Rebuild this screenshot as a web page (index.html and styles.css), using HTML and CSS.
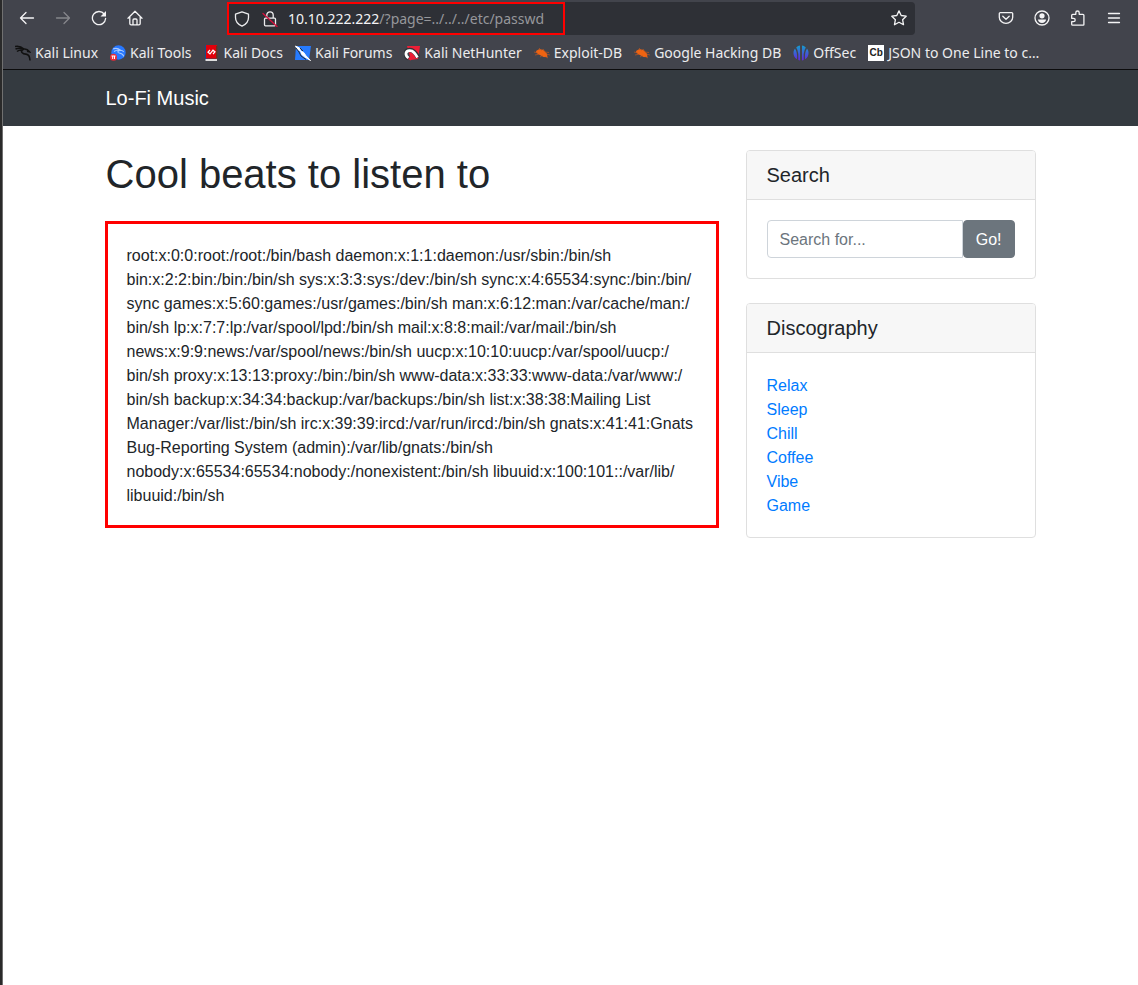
FILE: index.html
```html
<!DOCTYPE html>
<html lang="en">
<head>
<meta charset="utf-8">
<title>Lo-Fi Music</title>
<link rel="stylesheet" href="styles.css">
</head>
<body>
<div class="window">
  <header class="browser">
    <div class="toolbar">
      <div class="nav-buttons">
        <button class="tool" aria-label="Back"><svg viewBox="0 0 16 16"><path d="M14.500 8H1.500M7 2.500 1.500 8 7 13.500"/></svg></button>
        <button class="tool dim" aria-label="Forward" disabled><svg viewBox="0 0 16 16"><path d="M1.500 8h13M9 2.500 14.500 8 9 13.500"/></svg></button>
        <button class="tool" aria-label="Reload"><svg viewBox="0 0 16 16"><path d="M13.200 4A6.600 6.600 0 1 0 14.600 8.500"/><path class="solid" d="M15 1v5.500H9.500z"/></svg></button>
        <button class="tool" aria-label="Home"><svg viewBox="0 0 16 16"><path d="M1 8.200 8 1.200l7 7M2.800 7v6.500q0 1.300 1.300 1.300h7.800q1.300 0 1.300-1.300V7M6 14.500V10q0-1 1-1h2q1 0 1 1v4.500"/></svg></button>
      </div>
      <div class="urlbar">
        <div class="address">
          <svg class="icon" viewBox="0 0 16 16"><path d="M8 .9 14.500 3.200v3.300c0 4-2.500 7-6.500 8.700C4 13.500 1.500 10.500 1.500 6.500V3.200z"/></svg>
          <svg class="icon" viewBox="0 0 16 16"><path d="M4.800 7V4a3.200 3.200 0 0 1 6.400 0v3M3.500 7.200h9q1 0 1 1v5.600q0 1-1 1h-9q-1 0-1-1V8.200q0-1 1-1z"/><path class="strike" d="M1 2.500 15 15.500"/></svg>
          <span class="url"><span class="host">10.10.222.222</span>/?page=../../../etc/passwd</span>
        </div>
        <button class="star" aria-label="Bookmark this page"><svg class="icon" viewBox="0 0 16 16"><path d="m8 .9 2.200 4.600 5 .7-3.600 3.500.9 5L8 12.300l-4.500 2.400.9-5L.8 6.200l5-.7z"/></svg></button>
      </div>
      <div class="nav-buttons">
        <button class="tool" aria-label="Save to Pocket"><svg viewBox="0 0 16 16"><path d="M2.300 2.600h11.400q1 0 1 1v3.600a6.700 6.200 0 0 1-13.400 0V3.600q0-1 1-1zM4.800 6.200 8 9.200l3.200-3"/></svg></button>
        <button class="tool" aria-label="Account"><svg viewBox="0 0 16 16"><circle cx="8" cy="8" r="7"/><circle class="fill" cx="8" cy="5.800" r="2.600"/><path class="fill" d="M3.900 9.500h8.200Q11.500 12.900 8 12.900T3.900 9.500z"/></svg></button>
        <button class="tool" aria-label="Extensions"><svg viewBox="0 0 16 16"><path d="M5.800 4.300V2.700a1.700 1.700 0 0 1 3.400 0v1.600h3.700q1 0 1 1v9.300q0 .6-.6.600H2.700q-1 0-1-1v-2.500h1.800a1.700 1.700 0 0 0 0-3.400H1.700V5.300q0-1 1-1z"/></svg></button>
        <button class="tool" aria-label="Menu"><svg viewBox="0 0 16 16"><path d="M2.500 3.500h11M2.500 8h11M2.500 12.500h11"/></svg></button>
      </div>
    </div>
    <nav class="bookmarks" aria-label="Bookmarks">
      <a href="#"><svg viewBox="0 0 16 16"><g class="dragon-dark"><path d="M0 1.500Q5 .5 9 4M.500 4q4-1.600 8.500 0M2 6.500q2-1.600 4.500-1.500M9 4Q5.500 5.500 7 7.500q1.500 1.700 4 1.600 3.800.4 4 6.400M9 4q3-.5 5.500 2.800L12 6.200"/></g></svg>Kali Linux</a>
      <a href="#"><svg viewBox="0 0 16 16"><circle cx="8.500" cy="7.500" r="7.200" fill="#2777ff"/><path d="M3 4q4-1.800 7.500 1.200Q7 6 8.200 7.500c1.200 1.300 4.700.3 5.500 4M4 6.500q3-2 6.500-1.300 2 0 3.200 1.700" fill="none" stroke="#a9cbff" stroke-width="1.100"/><circle cx="3.500" cy="12.200" r="3.500" fill="#ec2937"/><path d="M1.500 11h4M2.700 11v3M4.500 11v3" stroke="#fff" fill="none"/></svg>Kali Tools</a>
      <a href="#"><svg viewBox="0 0 16 16"><path d="M1 0h4v15H1z" fill="#174a8b"/><path d="M2 0h11v13.500H2z" fill="#e1000b"/><path d="M12 1h1.500v12H12z" fill="#6b321c"/><path d="M1.500 14H13v2H1.500z" fill="#dedede"/><path d="M6 5 4 7.200l2 1.600 3-3.600 2 1.600L9 9" fill="none" stroke="#fff" stroke-width="1.200"/></svg>Kali Docs</a>
      <a href="#"><svg viewBox="0 0 16 16"><path d="M1 1h15l-2 14H0z" fill="#267bff"/><path d="M.5 1 4.500 3l1 3 3 1.300 2.500 3.500 4.500 4.700-6-3.700-3-2.500-.8-3L2.500 4.500z" fill="#fff" stroke="#fff"/><path d="m1 3 3 4 2 4 5 3.500M5 3l3 3" fill="none" stroke="#292d33"/></svg>Kali Forums</a>
      <a href="#"><svg viewBox="0 0 16 16"><path d="M3 1h13l-2 13-7 1z" fill="#ed1e36"/><path d="M4.500 13.500C-.5 10 1 5.300 5.500 5c4-.3 6.500 3.500 8.500 7.500" fill="none" stroke="#30343a" stroke-width="4.500"/><path d="M4.500 13C.500 10 1.500 6 5.500 5.700c4-.3 6 3.300 8 6.800" fill="none" stroke="#fff" stroke-width="2.800"/><path d="m4 14 2.500-3 2 2-2 2.500z" fill="#ed1e36"/></svg>Kali NetHunter</a>
      <a href="#"><svg viewBox="0 0 16 16"><path d="m2 6 3-1.800 4 .5 4 4 .5 3.500-4-.2-4.500-2.500L2.500 8z" fill="#ef6412"/><path d="m0 7 4 1M5 3l3 3M1 10l5-1M6 12l3-2M9 4l2 3 4 .5M12 9l4 1M11 11l3 2" fill="none" stroke="#d65b17" stroke-width=".6"/></svg>Exploit-DB</a>
      <a href="#"><svg viewBox="0 0 16 16"><path d="m2 6 3-1.800 4 .5 4 4 .5 3.500-4-.2-4.500-2.500L2.500 8z" fill="#ef6412"/><path d="m0 7 4 1M5 3l3 3M1 10l5-1M6 12l3-2M9 4l2 3 4 .5M12 9l4 1M11 11l3 2" fill="none" stroke="#d65b17" stroke-width=".6"/></svg>Google Hacking DB</a>
      <a href="#"><svg viewBox="0 0 16 16"><defs><linearGradient id="offsec" x2="0" y2="1"><stop stop-color="#159dce"/><stop offset="1" stop-color="#6425dc"/></linearGradient></defs><path d="M7 .5v15L5.300 15V9Q5 5 3.200 2.500Q5 .7 7 .5zM2 3.500Q4.700 8 4 14.200 0 12 .5 7 .8 4.800 2 3.500zM9 .5v15l1.700-.5V9q.3-4 2.100-6.500Q11 .7 9 .5zM14 3.500Q11.300 8 12 14.200 16 12 15.500 7 15.200 4.800 14 3.500z" fill="url(#offsec)"/></svg>OffSec</a>
      <a href="#"><span class="cb" aria-hidden="true">Cb</span>JSON to One Line to c…</a>
    </nav>
  </header>

  <nav class="navbar"><div class="container"><a class="brand" href="#">Lo-Fi Music</a></div></nav>

  <div class="container columns">
    <main>
      <h1>Cool beats to listen to</h1>
      <p class="output">root:x:0:0:root:/root:/bin/bash daemon:x:1:1:daemon:/usr/sbin:/bin/sh bin:x:2:2:bin:/bin:/bin/sh sys:x:3:3:sys:/dev:/bin/sh sync:x:4:65534:sync:/bin:/bin/<wbr>sync games:x:5:60:games:/usr/games:/bin/sh man:x:6:12:man:/var/cache/man:/<wbr>bin/sh lp:x:7:7:lp:/var/spool/lpd:/bin/sh mail:x:8:8:mail:/var/mail:/bin/sh news:x:9:9:news:/var/spool/news:/bin/sh uucp:x:10:10:uucp:/var/spool/uucp:/<wbr>bin/sh proxy:x:13:13:proxy:/bin:/bin/sh www-data:x:33:33:www-data:/var/www:/<wbr>bin/sh backup:x:34:34:backup:/var/backups:/bin/sh list:x:38:38:Mailing List Manager:/var/list:/bin/sh irc:x:39:39:ircd:/var/run/ircd:/bin/sh gnats:x:41:41:Gnats Bug-Reporting System (admin):/var/lib/gnats:/bin/sh nobody:x:65534:65534:nobody:/nonexistent:/bin/sh libuuid:x:100:101::/var/lib/<wbr>libuuid:/bin/sh</p>
    </main>
    <aside>
      <section class="card">
        <h2><label for="search">Search</label></h2>
        <form class="card-body search">
          <input id="search" type="text" placeholder="Search for...">
          <button type="button">Go!</button>
        </form>
      </section>
      <section class="card">
        <h2>Discography</h2>
        <ul class="card-body links">
          <li><a href="#">Relax</a></li>
          <li><a href="#">Sleep</a></li>
          <li><a href="#">Chill</a></li>
          <li><a href="#">Coffee</a></li>
          <li><a href="#">Vibe</a></li>
          <li><a href="#">Game</a></li>
        </ul>
      </section>
    </aside>
  </div>
</div>
</body>
</html>
```
FILE: styles.css
```css
* { box-sizing: border-box; }
body {
  margin: 0;
  background: #fff;
  color: #212529;
  font: 16px/24px "Liberation Sans", Arial, sans-serif;
}
a { color: #007bff; text-decoration: none; }
button { font: inherit; cursor: pointer; }
h1, h2, p, ul { margin: 0; font-weight: 400; }

.window {
  min-height: 100vh;
  border-left: 1px solid #707070;
  box-shadow: -2px 0 #2a2a2a;
  margin-left: 2px;
}

/* Browser chrome */
.browser {
  background: #42444c;
  border-bottom: 1px solid #0c0c0d;
  color: #ececee;
  font-family: "Noto Sans", sans-serif;
}
.toolbar { display: flex; justify-content: space-between; padding: 2px 6px; }
.nav-buttons { display: flex; }
.tool, .star {
  display: flex;
  align-items: center;
  justify-content: center;
  width: 36px;
  height: 32px;
  padding: 0;
  border: 0;
  background: none;
  color: #f4f4f5;
}
.star { width: 32px; }
.dim { color: #85868b; }
.browser svg { width: 16px; height: 16px; flex: none; }
.tool svg, .icon { fill: none; stroke: currentColor; stroke-width: 1.3; stroke-linejoin: round; stroke-linecap: round; }
.tool .fill, .tool .solid { fill: currentColor; stroke: none; }
.icon .strike { stroke: #d70f3c; }
.urlbar {
  flex: 1;
  display: flex;
  justify-content: space-between;
  margin: 0 73px 0 74px;
  border-radius: 4px;
  background: #2e3036;
}
.address {
  display: flex;
  align-items: center;
  width: 338px;
  height: 33px;
  padding: 0 5px;
  gap: 12px;
  border: 2px solid #f00;
}
.url { margin-left: -2px; font-size: 14px; line-height: 24px; white-space: nowrap; color: #96979b; }
.host { color: #f4f4f5; }
.bookmarks {
  display: flex;
  gap: 12px;
  height: 32px;
  padding: 0 12px;
  align-items: center;
  white-space: nowrap;
}
.bookmarks a {
  display: flex;
  align-items: center;
  gap: 4px;
  color: #ececee;
  font-size: 14px;
  line-height: 20px;
}
.dragon-dark { fill: none; stroke: #111; stroke-width: 1.6; }
.cb {
  width: 16px;
  height: 16px;
  background: #fff;
  color: #222;
  font: bold 10px/16px "Liberation Sans", sans-serif;
  text-align: center;
}

/* Page */
.navbar { background: #343a40; padding: 8px 0; }
.container { max-width: 960px; margin: 0 auto; padding: 0 15px; }
.brand { display: block; padding: 5px 0; color: #fff; font-size: 20px; line-height: 30px; }
.columns {
  display: grid;
  grid-template-columns: minmax(0, 61fr) minmax(0, 29fr);
  gap: 30px;
  padding-top: 24px;
}
h1 { font-size: 40px; line-height: 48px; }
.output {
  margin: 23px -3px 0 -1px;
  padding: 20px 22px 17px 19px;
  border: 3px solid #f00;
}
.card { margin-bottom: 24px; border: 1px solid #dfdfdf; border-radius: 4px; }
.card h2 {
  padding: 12px 20px;
  background: #f7f7f7;
  border-bottom: 1px solid #dfdfdf;
  border-radius: 3px 3px 0 0;
  font-size: 20px;
  line-height: 24px;
}
.card-body { padding: 20px; list-style: none; }
.links { padding: 21px 20px 19px; }
.search { display: flex; }
.search input {
  flex: 1;
  min-width: 0;
  height: 38px;
  padding: 7px 12px 5px;
  border: 1px solid #ced4da;
  border-radius: 4px 0 0 4px;
  font: inherit;
}
.search input::placeholder { color: #6c757d; opacity: 1; }
.search button {
  padding: 7px 12px 5px;
  border: 1px solid #6c757d;
  border-radius: 4px;
  background: #6c757d;
  color: #fff;
}
```
